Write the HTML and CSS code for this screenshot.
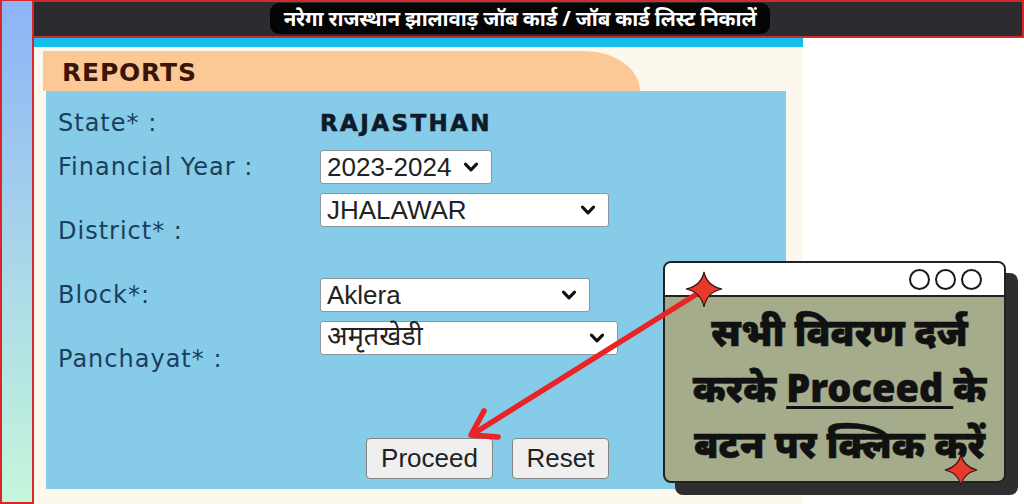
FILE: index.html
```html
<!DOCTYPE html>
<html lang="hi">
<head>
<meta charset="utf-8">
<title>NREGA Rajasthan Jhalawar Job Card</title>
<link rel="stylesheet" href="styles.css">
</head>
<body>
<div class="page">
  <div class="strip"></div>
  <div class="main">
    <div class="topbar">
      <div class="title">नरेगा राजस्थान झालावाड़ जॉब कार्ड / जॉब कार्ड लिस्ट निकालें</div>
    </div>
    <div class="content">
      <div class="sheet">
        <div class="tab">REPORTS</div>
        <div class="panel">
          <div class="form">
            <div class="label r1">State* :</div>
            <div class="field r1 state">RAJASTHAN</div>

            <div class="label r2">Financial Year :</div>
            <div class="field r2"><div class="select w-year"><span>2023-2024</span><svg class="chev" viewBox="0 0 14 9"><path d="M2 2 L7 7 L12 2"/></svg></div></div>

            <div class="label r3">District* :</div>
            <div class="field r3 top"><div class="select w-dist"><span>JHALAWAR</span><svg class="chev" viewBox="0 0 14 9"><path d="M2 2 L7 7 L12 2"/></svg></div></div>

            <div class="label r4">Block*:</div>
            <div class="field r4 top"><div class="select w-block"><span>Aklera</span><svg class="chev" viewBox="0 0 14 9"><path d="M2 2 L7 7 L12 2"/></svg></div></div>

            <div class="label r5">Panchayat* :</div>
            <div class="field r5 top"><div class="select w-panch"><span class="hi">अमृतखेडी</span><svg class="chev" viewBox="0 0 14 9"><path d="M2 2 L7 7 L12 2"/></svg></div></div>

            <div class="field r6 buttons">
              <button class="btn proceed">Proceed</button>
              <button class="btn reset">Reset</button>
            </div>
          </div>
        </div>
      </div>
      <div class="blank"></div>
    </div>
  </div>
</div>

<div class="callout">
  <div class="callout-head">
    <span class="dot"></span><span class="dot"></span><span class="dot"></span>
  </div>
  <div class="callout-body">
    <p>सभी विवरण दर्ज</p>
    <p>करके <u>Proceed </u>के</p>
    <p>बटन पर क्लिक करें</p>
  </div>
</div>

<svg class="overlay" viewBox="0 0 1024 504" width="1024" height="504">
  <g class="arrow">
    <line x1="700" y1="292" x2="473" y2="434"/>
    <polyline points="484,411 471,435 498,437"/>
  </g>
  <path class="star" d="M704 272 Q707 286 722 289 Q707 292 704 307 Q701 292 686 289 Q701 286 704 272 Z"/>
  <path class="star" d="M961 455 Q964 467 977 470 Q964 473 961 485 Q958 473 945 470 Q958 467 961 455 Z"/>
</svg>
</body>
</html>
```

FILE: styles.css
```css
* { box-sizing: border-box; }
html, body { margin: 0; padding: 0; }
body {
  width: 1024px;
  height: 504px;
  overflow: hidden;
  position: relative;
  background: #ffffff;
  font-family: "DejaVu Sans", Verdana, sans-serif;
}
.page {
  display: flex;
  height: 504px;
}
.strip {
  width: 34px;
  flex: 0 0 34px;
  background: linear-gradient(#8db4f7, #c4f7db);
  border: 2px solid #d9262a;
  border-top-width: 1px;
}
.main {
  flex: 1;
  display: flex;
  flex-direction: column;
}
.topbar {
  height: 38px;
  flex: 0 0 38px;
  background: #2c2b2f;
  border: 2px solid #cf2a2c;
  border-left: none;
  padding-left: 236px;
  padding-top: 1px;
  display: flex;
  align-items: flex-start;
}
.title {
  height: 31px;
  background: #050505;
  color: #ffffff;
  border-radius: 9px;
  padding: 0 6px;
  font-family: "Noto Sans", "Noto Sans Devanagari", sans-serif;
  font-weight: 700;
  font-size: 20.5px;
  line-height: 30px;
  white-space: nowrap;
  width: 500px;
  text-align: center;
  letter-spacing: -0.2px;
}
.content {
  flex: 1;
  display: flex;
}
.sheet {
  width: 769px;
  flex: 0 0 769px;
  background: #fdf8ee;
  border-top: 9px solid #13bdec;
  padding: 4px 17px 0 9px;
  display: flex;
  flex-direction: column;
}
.blank { flex: 1; background: #ffffff; }
.tab {
  width: 597px;
  height: 40px;
  background: #fcc895;
  border-top-right-radius: 56px 40px;
  padding-left: 19px;
  font-family: "DejaVu Sans", Verdana, sans-serif;
  font-weight: 700;
  font-size: 25px;
  letter-spacing: 0.8px;
  line-height: 43px;
  color: #3a1509;
}
.panel {
  margin-left: 3px;
  width: 740px;
  height: 398px;
  background: #86cbe8;
  padding: 14px 0 0 12px;
}
.form {
  display: grid;
  grid-template-columns: 262px 1fr;
  grid-template-rows: 36px 34px 76px 34px 76px auto;
  row-gap: 9px;
}
.label {
  grid-column: 1;
  align-self: center;
  font-size: 24px;
  letter-spacing: 1px;
  color: #1c3e5e;
  white-space: pre;
  line-height: 28px;
}
.field { grid-column: 2; align-self: center; }
.field.top { align-self: start; }
.r1 { grid-row: 1; }
.r2 { grid-row: 2; }
.r3 { grid-row: 3; }
.r4 { grid-row: 4; }
.r5 { grid-row: 5; }
.r6 { grid-row: 6; }
.state {
  font-weight: 700;
  font-size: 23px;
  letter-spacing: 2.4px;
  color: #0f1a2a;
  line-height: 28px;
  -webkit-text-stroke: 0.6px #0f1a2a;
}
.select {
  height: 34px;
  background: #ffffff;
  border: 1px solid #8c96a0;
  border-radius: 3px;
  display: flex;
  align-items: center;
  justify-content: space-between;
  padding: 0 12px 0 6px;
  font-family: "Liberation Sans", Arial, sans-serif;
  font-size: 26px;
  color: #222222;
}
.select .hi { font-family: "Noto Sans", "Noto Sans Devanagari", sans-serif; font-size: 27px; line-height: 30px; margin-top: -6px; }
.chev { width: 16px; height: 10px; flex: 0 0 16px; }
.chev path { fill: none; stroke: #111; stroke-width: 2.8; stroke-linecap: round; stroke-linejoin: round; }
.w-year { width: 172px; }
.w-dist { width: 289px; }
.w-block { width: 270px; }
.w-panch { width: 298px; }
.buttons {
  padding-top: 32px;
  padding-left: 46px;
  display: flex;
  gap: 19px;
}
.btn {
  height: 41px;
  background: #efefef;
  border: 1px solid #858585;
  border-radius: 4px;
  font-family: "Liberation Sans", Arial, sans-serif;
  font-size: 26px;
  color: #222222;
  padding: 0;
}
.proceed { width: 127px; }
.reset { width: 97px; }

.callout {
  position: absolute;
  left: 663px;
  top: 261px;
  width: 343px;
  height: 222px;
  border: 2.5px solid #222222;
  border-radius: 8px;
  box-shadow: 12px 12px 0 #2e2e2e;
  background: #a4ac8b;
  display: flex;
  flex-direction: column;
  overflow: hidden;
}
.callout-head {
  height: 34px;
  flex: 0 0 34px;
  background: #ffffff;
  border-bottom: 2.5px solid #222222;
  display: flex;
  justify-content: flex-end;
  align-items: center;
  gap: 5px;
  padding-right: 22px;
}
.dot {
  width: 21px;
  height: 21px;
  border: 2.5px solid #1a1a1a;
  border-radius: 50%;
}
.callout-body {
  flex: 1;
  padding: 6px 0 0 10px;
  text-align: center;
  font-family: "Noto Sans", "Noto Sans Devanagari", sans-serif;
  font-weight: 900;
  font-size: 38px;
  color: #111111;
  -webkit-text-stroke: 0.5px #111111;
}
.callout-body p { margin: 0; line-height: 56px; white-space: nowrap; }
.callout-body u { text-decoration-thickness: 3px; text-underline-offset: 4px; }

.overlay {
  position: absolute;
  left: 0;
  top: 0;
  pointer-events: none;
}
.arrow line, .arrow polyline {
  fill: none;
  stroke: #e82424;
  stroke-width: 5.5;
  stroke-linecap: round;
  stroke-linejoin: round;
}
.star { fill: #e8392c; stroke: #3a1414; stroke-width: 1.2; }
```
